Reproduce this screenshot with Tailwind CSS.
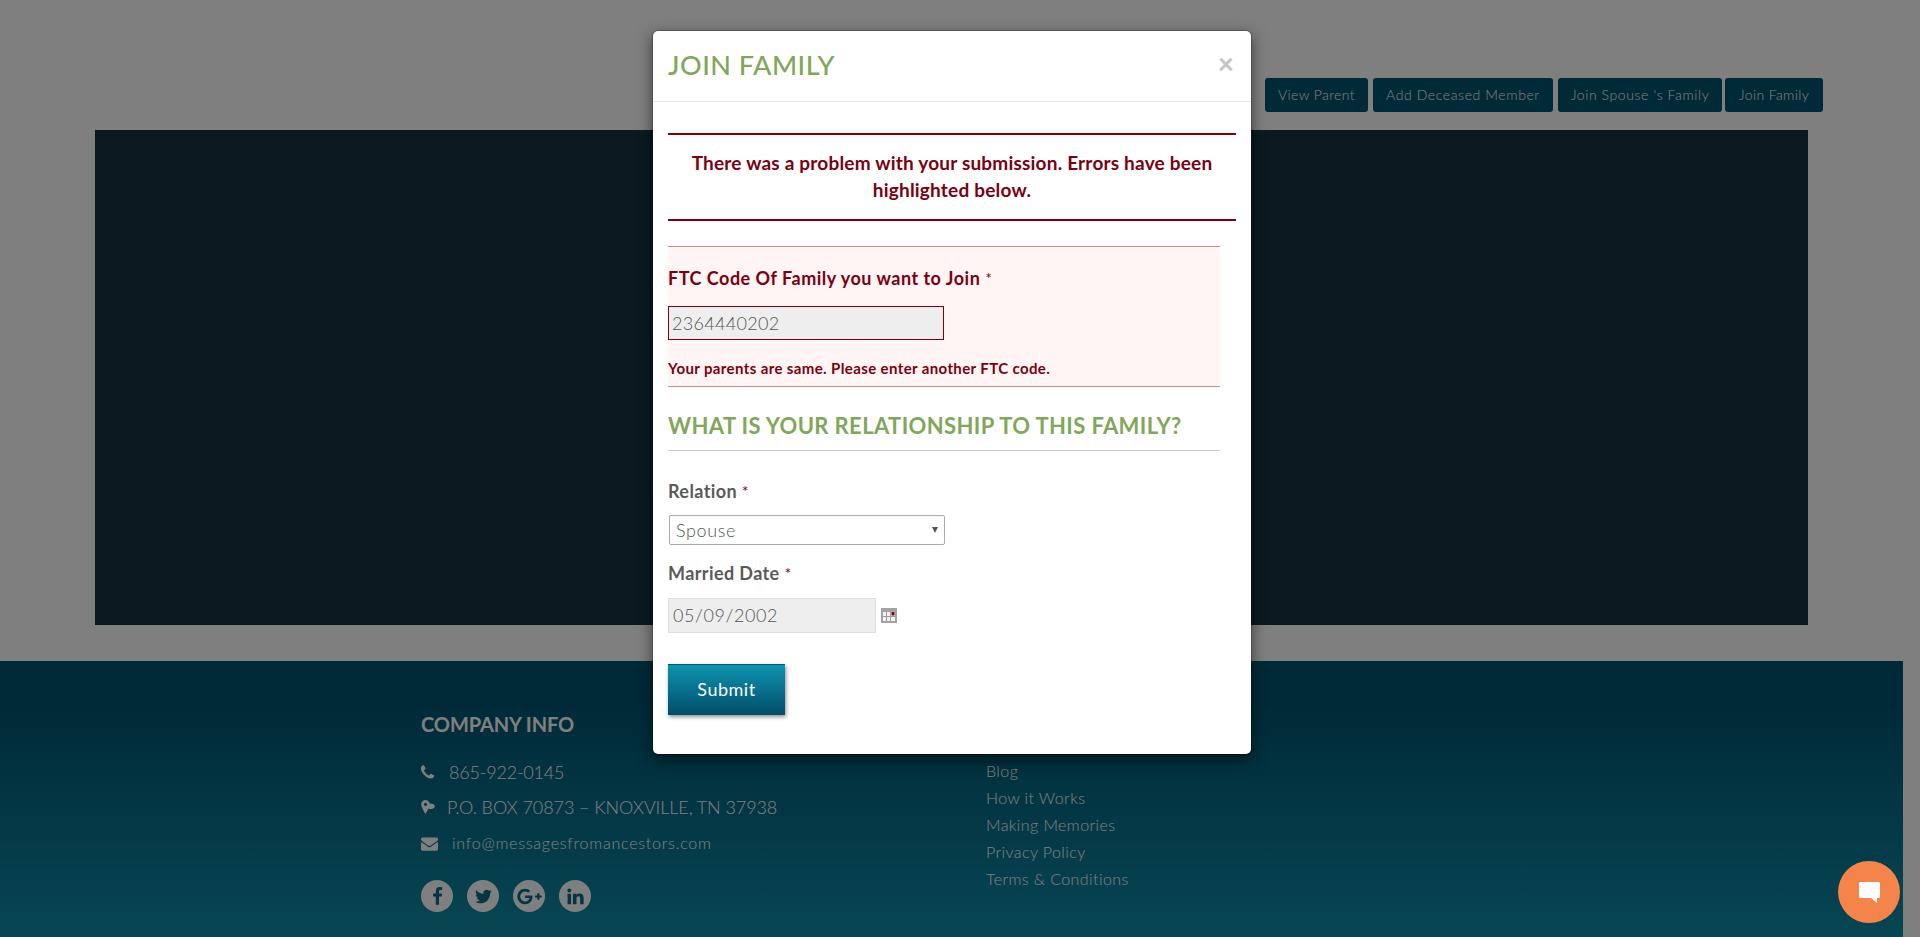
<!DOCTYPE html>
<html lang="en">
<head>
<meta charset="utf-8">
<title>Join Family</title>
<script src="https://cdn.jsdelivr.net/npm/@tailwindcss/browser@4"></script>
</head>
<body class="[font-family:Lato,'Open_Sans',sans-serif] bg-white overflow-hidden">
<div class="relative h-[937px] w-[1920px] overflow-hidden">
  <!-- page underneath -->
  <div class="w-[1903px]">
    <div class="flex justify-end gap-[5px] pt-[78px] pr-[80px] h-[130px]">
      <a class="w-[103px] h-[34px] pb-[1px] flex items-center justify-center rounded-[3px] bg-[#005470] text-white text-[14px] font-light tracking-[0.4px]">View Parent</a>
      <a class="w-[180px] h-[34px] pb-[1px] flex items-center justify-center rounded-[3px] bg-[#005470] text-white text-[14px] font-light tracking-[0.6px]">Add Deceased Member</a>
      <a class="w-[164px] h-[34px] pb-[1px] flex items-center justify-center rounded-[3px] bg-[#005470] text-white text-[14px] font-light tracking-[0.6px]">Join Spouse 's Family</a>
      <a class="w-[98px] -ml-[2px] h-[34px] pb-[1px] flex items-center justify-center rounded-[3px] bg-[#005470] text-white text-[14px] font-light tracking-[0.4px]">Join Family</a>
    </div>
    <div class="ml-[95px] mr-[95px] h-[495px] bg-[#163440]"></div>
    <footer class="mt-[36px] h-[276px] bg-[linear-gradient(180deg,#005470_0%,#005470_15%,#0f8ca8_100%)] text-white flex pl-[421px]">
      <div class="w-[565px] pt-[50px]">
        <h3 class="text-[20px] leading-[26px] font-bold tracking-[-0.1px]">COMPANY INFO</h3>
        <div class="mt-[22px] h-[26px] flex items-center text-[18px] font-light tracking-[-0.2px]">
          <svg class="w-[17px] h-[17px] -ml-[2px] mr-[13px] fill-white" viewBox="0 0 1792 1792"><path d="M1600 1240q0 27-10 70.5t-21 68.5q-21 50-122 106-94 51-186 51-27 0-53-3.5t-57.5-12.5-47-14.5-55.5-20.5-49-18q-98-35-175-83-127-79-264-216t-216-264q-48-77-83-175-3-9-18-49t-20.5-55.5-14.5-47-12.5-57.5-3.5-53q0-92 51-186 56-101 106-122 25-11 68.5-21t70.5-10q14 0 21 3 18 6 53 76 11 19 30 54t35 63.5 31 53.5q3 4 17.5 25t21.5 35.5 7 28.5q0 20-28.5 50t-62 55-62 53-28.5 46q0 9 5 22.5t8.5 20.5 14 24 11.5 19q76 137 174 235t235 174q2 1 19 11.5t24 14 20.5 8.5 22.5 5q18 0 46-28.5t53-62 55-62 50-28.5q14 0 28.5 7t35.5 21.5 25 17.5q25 15 53.5 31t63.5 35 54 30q70 35 76 53 3 7 3 21z"/></svg>
          <span>865-922-0145</span>
        </div>
        <div class="mt-[9px] h-[26px] flex items-center text-[18px] font-light tracking-[-0.08px]">
          <svg class="w-[14px] h-[14px] mr-[12px]" viewBox="0 0 14 14"><path class="fill-white" fill-rule="evenodd" d="M4.5 0C2.1 0 .2 1.9.2 4.2c0 2.4 2.2 6.500 4.300 9.800 1.100-1.700 2.200-3.700 3-5.500.6.4 1.200.6 2 .6 2.300 0 4.300-1.200 4.300-2.900S11.900 3.400 9.600 3.400c-.4 0-.7 0-1 .1C8.200 1.500 6.500 0 4.500 0zM4.500 2.700a1.600 1.600 0 1 1 0 3.200 1.600 1.600 0 0 1 0-3.200z"/></svg>
          <span>P.O. BOX 70873 – KNOXVILLE, TN 37938</span>
        </div>
        <div class="mt-[10px] h-[26px] flex items-center text-[16px] font-light tracking-[0.77px]">
          <svg class="w-[17px] h-[17px] mr-[14px] fill-white" viewBox="0 0 1792 1792"><path d="M1792 710v794q0 66-47 113t-113 47h-1472q-66 0-113-47t-47-113v-794q44 49 101 87 362 246 497 345 57 42 92.5 65.5t94.5 48 110 24.5h2q51 0 110-24.5t94.5-48 92.5-65.5q170-123 498-345 57-39 100-87zm0-294q0 79-49 151t-122 123q-376 261-468 325-10 7-42.5 30.5t-54 38-52 32.5-57.5 27-50 9h-2q-23 0-50-9t-57.5-27-52-32.5-54-38-42.5-30.5q-91-64-262-182.5t-205-142.5q-62-42-117-115.5t-55-136.5q0-78 41.5-130t118.5-52h1472q65 0 112.5 45t47.5 109z"/></svg>
          <span>info@messagesfromancestors.com</span>
        </div>
        <div class="mt-[24px] flex gap-[14px]">
          <span class="w-[32px] h-[32px] rounded-full bg-white flex items-center justify-center"><svg class="w-[19px] h-[19px] fill-[#0a6a84]" viewBox="0 0 1792 1792"><path d="M1343 12v264h-157q-86 0-116 36t-30 108v189h293l-39 296h-254v759h-306v-759h-255v-296h255v-218q0-186 104-288.5t277-102.5q147 0 228 12z"/></svg></span>
          <span class="w-[32px] h-[32px] rounded-full bg-white flex items-center justify-center"><svg class="w-[19px] h-[19px] fill-[#0a6a84]" viewBox="0 0 1792 1792"><path d="M1684 408q-67 98-162 167 1 14 1 42 0 130-38 259.5t-115.5 248.5-184.5 210.5-258 146-323 54.5q-271 0-496-145 35 4 78 4 225 0 401-138-105-2-188-64.5t-114-159.5q33 5 61 5 43 0 85-11-112-23-185.5-111.5t-73.5-205.5v-4q68 38 146 41-66-44-105-115t-39-154q0-88 44-163 121 149 294.5 238.5t371.5 99.5q-8-38-8-74 0-134 94.5-228.5t228.5-94.5q140 0 236 102 109-21 205-78-37 115-142 178 93-10 186-50z"/></svg></span>
          <span class="w-[32px] h-[32px] rounded-full bg-white flex items-center justify-center"><svg class="w-[25px] h-[19px] fill-[#0a6a84]" viewBox="0 0 2304 1792"><path d="M1437 913q0 208-87 370.5t-248 254-369 91.5q-149 0-285-58t-234-156-156-234-58-285 58-285 156-234 234-156 285-58q286 0 491 192l-199 191q-117-113-292-113-123 0-227.5 62t-165.5 168.5-61 232.5 61 232.5 165.5 168.5 227.5 62q83 0 152.5-23t114.5-57.5 78.5-78.5 49-83 21.5-74h-416v-252h692q12 63 12 122zm867-122v210h-209v209h-210v-209h-209v-210h209v-209h210v209h209z"/></svg></span>
          <span class="w-[32px] h-[32px] rounded-full bg-white flex items-center justify-center"><svg class="w-[19px] h-[19px] fill-[#0a6a84]" viewBox="0 0 1792 1792"><path d="M477 625v991h-330v-991h330zm21-306q1 73-50.5 122t-135.5 49h-2q-82 0-132-49t-50-122q0-74 51.5-122.5t134.5-48.5 133 48.5 51 122.5zm1166 729v568h-329v-530q0-105-40.5-164.5t-126.5-59.5q-63 0-105.5 34.5t-63.5 85.5q-11 30-11 81v553h-329q2-399 2-647t-1-296l-1-48h329v144h-2q20-32 41-56t56.5-52 87-43.5 114.5-15.5q171 0 275 113.5t104 332.5z"/></svg></span>
        </div>
      </div>
      <ul class="pt-[96px] text-[16px] leading-[27px] font-light tracking-[0.42px]">
        <li>Blog</li>
        <li>How it Works</li>
        <li>Making Memories</li>
        <li>Privacy Policy</li>
        <li>Terms &amp; Conditions</li>
      </ul>
    </footer>
  </div>

  <!-- backdrop -->
  <div class="absolute inset-0 bg-black/50"></div>

  <!-- modal -->
  <div class="absolute left-[652px] top-[30px] w-[600px] h-[725px] bg-white rounded-[6px] border border-black/20 bg-clip-padding shadow-[0_5px_15px_rgba(0,0,0,0.5)]">
    <div class="h-[71px] pb-[1px] border-b border-[#e5e5e5] flex items-center justify-between pl-[15px] pr-[17px]">
      <h2 class="text-[27px] font-medium text-[#80a75a] tracking-[0.5px]">JOIN FAMILY</h2>
      <span class="text-[28px] leading-none font-black text-[#c6c6c6] -mt-[6px]">×</span>
    </div>
    <div class="px-[15px]">
      <div class="mt-[31px] h-[88px] pb-[2px] border-y-2 border-[#7b0012] flex items-center justify-center text-center text-[19px] leading-[27px] font-bold text-[#7b0012] tracking-[0.2px]">
        <p>There was a problem with your submission. Errors have been<br>highlighted below.</p>
      </div>
      <div class="mt-[25px] w-[552px] h-[141px] bg-[#fff5f5] border-y border-[#c98a8f] text-[#7b0012]">
        <label class="block pt-[19px] text-[18px] leading-[24px] font-bold tracking-[0.5px]">FTC Code Of Family you want to Join <span class="text-[16px] font-normal align-top">*</span></label>
        <div class="mt-[16px] w-[276px] h-[34px] border border-[#7b0012] bg-[#eee] pl-[3px] flex items-center text-[18px] font-light text-[#555] tracking-[0.3px]">2364440202</div>
        <p class="mt-[18px] text-[15px] leading-[20px] font-bold tracking-[0.38px]">Your parents are same. Please enter another FTC code.</p>
      </div>
      <h3 class="mt-[22px] w-[552px] h-[42px] border-b border-[#ccc] text-[22px] leading-[34px] font-bold text-[#80a75a] tracking-[0.38px]">WHAT IS YOUR RELATIONSHIP TO THIS FAMILY?</h3>
      <label class="block mt-[28px] text-[18px] leading-[24px] font-bold text-[#5a5a5a] tracking-[0.4px]">Relation <span class="text-[16px] font-normal align-top text-[#7b0012]">*</span></label>
      <div class="mt-[12px] ml-[1px] w-[276px] h-[30px] border border-[#aaa] rounded-[2px] pl-[6px] pr-[5px] flex items-center justify-between text-[18px] font-light text-[#555]">
        <span class="tracking-[0.6px]">Spouse</span>
        <span class="w-0 h-0 border-x-[3px] border-t-[6px] border-x-transparent border-t-[#555] mr-[1px]"></span>
      </div>
      <label class="block mt-[16px] text-[18px] leading-[24px] font-bold text-[#5a5a5a] tracking-[0.4px]">Married Date <span class="text-[16px] font-normal align-top text-[#7b0012]">*</span></label>
      <div class="mt-[13px] flex items-center gap-[5px]">
        <div class="w-[208px] h-[35px] border border-[#ddd] bg-[#eee] pl-[4px] flex items-center text-[18px] font-light text-[#555] tracking-[0.6px]">05/09/2002</div>
        <svg class="w-[16px] h-[15px] -mt-[1px]" viewBox="0 0 16 15"><rect width="16" height="15" fill="#a3a3a3"/><rect x="2" y="4" width="12" height="9" fill="#f2f2f2"/><path d="M5.500 4v9M9.500 4v9M2 8.500h12" stroke="#9a9a9a"/><rect x="10.500" y="4" width="3" height="3.500" fill="#7b0012"/></svg>
      </div>
      <button class="mt-[31px] w-[117px] h-[51px] pb-[2px] flex items-center justify-center border-t border-[#005a76] bg-[linear-gradient(180deg,#0f93b2,#004d68)] text-white text-[18px] shadow-[1px_2px_4px_rgba(0,0,0,0.45)] tracking-[0.5px]">Submit</button>
    </div>
  </div>

  <!-- chat button -->
  <div class="absolute left-[1838px] top-[861px] w-[62px] h-[62px] rounded-full bg-[#f4844a] flex items-center justify-center">
    <svg class="w-[21px] h-[21px] fill-white" viewBox="0 0 21 21"><path d="M1.500 0h18a1.500 1.500 0 0 1 1.500 1.500v13a1.500 1.500 0 0 1-1.500 1.500H18v5l-6-5H1.500A1.500 1.500 0 0 1 0 14.500v-13A1.500 1.500 0 0 1 1.500 0z"/></svg>
  </div>
</div>
</body>
</html>
